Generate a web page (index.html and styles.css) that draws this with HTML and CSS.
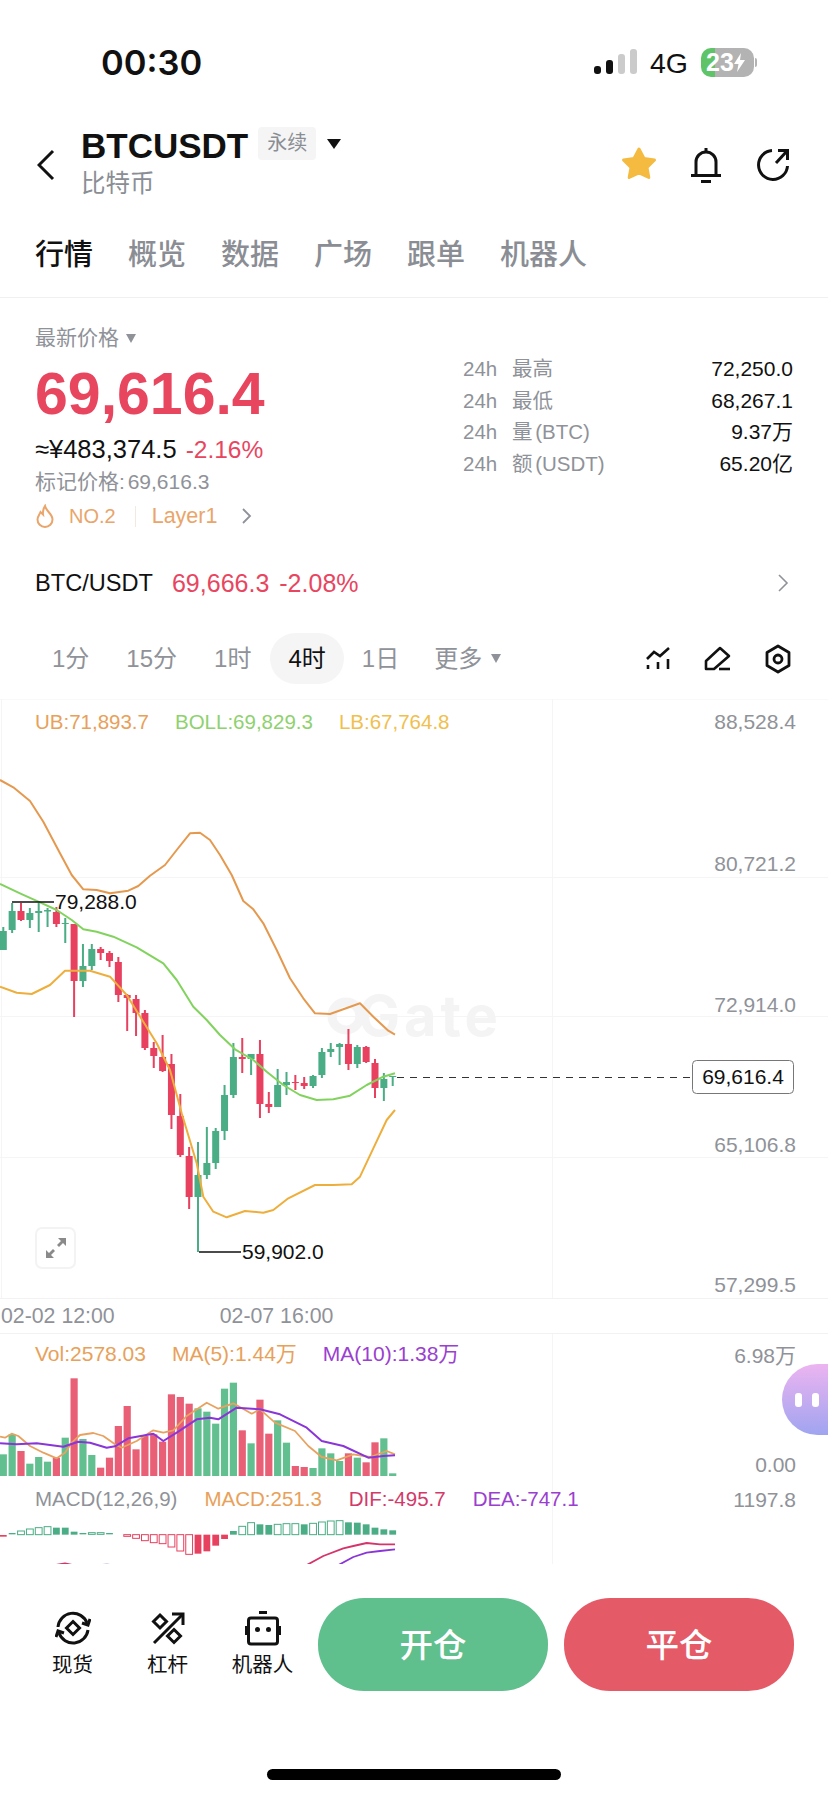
FILE: index.html
```html
<!DOCTYPE html>
<html lang="zh-CN">
<head>
    <meta charset="UTF-8">
    <meta name="viewport" content="width=device-width, initial-scale=1.0">
    <title>BTCUSDT 行情</title>
    <link rel="stylesheet" href="styles.css">
</head>
<body>
    <div class="page">
        <div class="status-bar">
            <span class="clock">00:30</span>
            <div class="status-right">
                <div class="signal">
                    <i class="bar-1"></i><i class="bar-2"></i><i class="bar-3"></i><i class="bar-4"></i>
                </div>
                <span class="network">4G</span>
                <div class="battery">
                    <span>23</span>
                    <svg width="11" height="19" viewBox="0 0 11 19"><path d="M7 0 L0 11 H4.5 L3 19 L11 7 H6 Z" fill="#fff"/></svg>
                </div>
                <i class="battery-nub"></i>
            </div>
        </div>

        <div class="nav">
            <svg class="back" width="18" height="32" viewBox="0 0 18 32"><path d="M16 2 L2 16 L16 30" fill="none" stroke="#111" stroke-width="3"/></svg>
            <div class="title-block">
                <div class="title-row">
                    <h1>BTCUSDT</h1>
                    <span class="tag">永续</span>
                    <i class="tri-down"></i>
                </div>
                <div class="subtitle">比特币</div>
            </div>
            <div class="nav-icons">
                <svg class="icon-star" width="36" height="34" viewBox="0 0 36 34"><path d="M18 3 L23 12.5 L33.5 14 L26 21.5 L27.8 31.5 L18 27 L8.2 31.5 L10 21.5 L2.5 14 L13 12.5 Z" fill="#f4bb40" stroke="#f4bb40" stroke-width="3" stroke-linejoin="round"/></svg>
                <svg width="32" height="38" viewBox="0 0 32 38" fill="none" stroke="#111" stroke-width="3"><path d="M6 29 V16 A10 10 0 0 1 26 16 V29"/><path d="M1 29.5 H31"/><path d="M16 2 V6"/><path d="M11 35.5 H21"/></svg>
                <svg width="36" height="36" viewBox="0 0 36 36" fill="none" stroke="#111" stroke-width="3"><path d="M17 4.5 A14.5 14.5 0 1 0 32.5 20"/><path d="M21 17 L32 5"/><path d="M23 4.5 H32.5 V14"/></svg>
            </div>
        </div>

        <div class="tabs">
            <span class="active">行情</span>
            <span>概览</span>
            <span>数据</span>
            <span>广场</span>
            <span>跟单</span>
            <span>机器人</span>
        </div>

        <div class="summary">
            <div class="price-col">
                <div class="price-label">最新价格<i class="tri-small"></i></div>
                <div class="price-big">69,616.4</div>
                <div class="price-sub">≈¥483,374.5<span class="red">-2.16%</span></div>
                <div class="price-mark">标记价格: 69,616.3</div>
                <div class="price-tags">
                    <svg width="20" height="24" viewBox="0 0 20 24"><path d="M10 2 C11 7 17.5 10 17.5 15.5 A7.5 7.5 0 0 1 2.5 15.5 C2.5 12.5 4.5 10.5 5.5 8 C6.5 9 7.5 10 8 10.5 C7.5 7 8.5 4.5 10 2 Z" fill="none" stroke="#e9a56a" stroke-width="2"/></svg>
                    <span class="rank">NO.2</span>
                    <i class="tag-sep"></i>
                    <span class="sector">Layer1</span>
                    <svg class="tag-more" width="12" height="18" viewBox="0 0 12 18"><path d="M2 2 L9 9 L2 16" fill="none" stroke="#8f9298" stroke-width="1.8"/></svg>
                </div>
            </div>
            <div class="stats-col">
                <div class="stat-row"><span class="stat-label"><b>24h</b>最高</span><span>72,250.0</span></div>
                <div class="stat-row"><span class="stat-label"><b>24h</b>最低</span><span>68,267.1</span></div>
                <div class="stat-row"><span class="stat-label"><b>24h</b>量 (BTC)</span><span>9.37万</span></div>
                <div class="stat-row"><span class="stat-label"><b>24h</b>额 (USDT)</span><span>65.20亿</span></div>
            </div>
        </div>

        <div class="spot-row">
            <span class="spot-name">BTC/USDT</span>
            <span class="spot-price">69,666.3</span>
            <span class="spot-change">-2.08%</span>
            <svg class="spot-more" width="12" height="20" viewBox="0 0 12 20"><path d="M2 2 L10 10 L2 18" fill="none" stroke="#8f9298" stroke-width="1.6"/></svg>
        </div>

        <div class="periods">
            <span>1分</span>
            <span>15分</span>
            <span>1时</span>
            <span class="active">4时</span>
            <span class="day">1日</span>
            <span class="more">更多</span>
            <i class="tri-small"></i>
            <div class="period-icons">
                <svg width="28" height="28" viewBox="0 0 28 28" fill="none" stroke="#111" stroke-width="2.6"><path d="M3 14 L10 7 L16 11 L25 3"/><path d="M4 20 V24"/><path d="M14 17 V24"/><path d="M24 14 V24"/></svg>
                <svg width="28" height="28" viewBox="0 0 28 28" fill="none" stroke="#111" stroke-width="2.6"><path d="M2 24 V16 L16 3 L25 11 L10 24 Z" stroke-linejoin="round"/><path d="M15 24 H26"/></svg>
                <svg width="28" height="30" viewBox="0 0 28 30" fill="none" stroke="#111" stroke-width="2.8"><path d="M14 2 L25 8.5 V21.5 L14 28 L3 21.5 V8.5 Z" stroke-linejoin="round"/><circle cx="14" cy="15" r="4"/></svg>
            </div>
        </div>

        <div class="kline">
            <svg id="klineChart" class="chart-svg" width="828" height="599" viewBox="0 699 828 599">
                <g class="grid">
                    <path class="grid-top" d="M0 699.5 H828"/>
                    <path d="M0 877.5 H828 M0 1016.5 H828 M0 1157.5 H828"/>
                    <path d="M1.5 699 V1298 M552.5 699 V1298"/>
                </g>
                <g class="watermark">
                    <circle cx="346" cy="1016" r="14" fill="none" stroke="#f4f4f4" stroke-width="9"/>
                    <text x="358" y="1036">Gate</text>
                </g>
                <g class="axis">
                    <text x="796" y="729">88,528.4</text>
                    <text x="796" y="871">80,721.2</text>
                    <text x="796" y="1012">72,914.0</text>
                    <text x="796" y="1152">65,106.8</text>
                    <text x="796" y="1292">57,299.5</text>
                </g>
            </svg>
            <div class="legend legend-main">
                <span class="c-ub">UB:71,893.7</span>
                <span class="c-boll">BOLL:69,829.3</span>
                <span class="c-lb">LB:67,764.8</span>
            </div>
            <div class="expand-btn">
                <svg width="22" height="22" viewBox="0 0 22 22" fill="#8a8a8a"><path d="M13 1 H21 V9 L18 6 L14 10 L12 8 L16 4 Z"/><path d="M9 21 H1 V13 L4 16 L8 12 L10 14 L6 18 Z"/></svg>
            </div>
        </div>

        <div class="time-axis">
            <span>02-02 12:00</span>
            <span>02-07 16:00</span>
        </div>

        <div class="vol">
            <svg id="volChart" class="chart-svg" width="828" height="147" viewBox="0 1333 828 147">
                <g class="grid"><path d="M552.5 1333 V1480"/></g>
                <g class="axis">
                    <text x="796" y="1362">6.98万</text>
                    <text x="796" y="1471">0.00</text>
                </g>
            </svg>
            <div class="legend legend-vol">
                <span class="c-ub">Vol:2578.03</span>
                <span class="c-ub">MA(5):1.44万</span>
                <span class="c-dea">MA(10):1.38万</span>
            </div>
        </div>

        <div class="macd">
            <svg id="macdChart" class="chart-svg" width="828" height="83" viewBox="0 1480 828 83">
                <g class="grid"><path d="M552.5 1480 V1563"/></g>
                <g class="axis"><text x="796" y="1506">1197.8</text></g>
            </svg>
            <div class="legend legend-macd">
                <span class="c-gray">MACD(12,26,9)</span>
                <span class="c-ub">MACD:251.3</span>
                <span class="c-dif">DIF:-495.7</span>
                <span class="c-dea">DEA:-747.1</span>
            </div>
        </div>

        <div class="bottom-bar">
            <div class="tool">
                <svg width="36" height="36" viewBox="0 0 36 36" fill="none" stroke="#111" stroke-width="3"><path d="M3 17 A15 15 0 0 1 32 13"/><path d="M33 20 A15 15 0 0 1 4 23"/><path d="M27 13 L33 15 L35 9"/><path d="M9 23 L3 21 L1 27"/><path d="M18 11.5 L24.5 18 L18 24.5 L11.5 18 Z"/></svg>
                <span>现货</span>
            </div>
            <div class="tool">
                <svg width="36" height="36" viewBox="0 0 36 36" fill="none" stroke="#111" stroke-width="3"><path d="M4 33 L33 4"/><path d="M22 4 H33 V15"/><path d="M10 5 L16.5 11.5 L10 18 L3.5 11.5 Z"/><path d="M24 19.5 L30.5 26 L24 32.5 L17.5 26 Z"/></svg>
                <span>杠杆</span>
            </div>
            <div class="tool">
                <svg width="36" height="36" viewBox="0 0 36 36"><path d="M14 1 H22 V4 H14 Z" fill="#111"/><rect x="3.5" y="8" width="29" height="26" rx="2.5" fill="none" stroke="#111" stroke-width="3"/><path d="M0 16 H3 V25 H0 Z M33 16 H36 V25 H33 Z" fill="#111"/><circle cx="12.5" cy="19.5" r="2.5" fill="#111"/><circle cx="23.5" cy="19.5" r="2.5" fill="#111"/></svg>
                <span>机器人</span>
            </div>
            <button class="trade-btn open">开仓</button>
            <button class="trade-btn close">平仓</button>
        </div>

        <div class="home-bar"></div>

        <div class="bubble"><i></i><i></i></div>
    </div>

    <script src="chart.js"></script>
</body>
</html>
```

FILE: styles.css
```css
* {
    margin: 0;
    padding: 0;
    box-sizing: border-box;
    font-family: 'Liberation Sans', 'Noto Sans CJK SC', sans-serif;
}

body {
    background: #fff;
    color: #111;
}

i {
    display: block;
    font-style: normal;
}

.page {
    position: relative;
    width: 828px;
    height: 1796px;
    overflow: hidden;
}

/* status bar */
.status-bar {
    display: flex;
    align-items: center;
    height: 122px;
    padding: 2px 71px 0 101px;
}

.clock {
    font-family: 'Inter', sans-serif;
    font-size: 34.5px;
    font-weight: 600;
}

.status-right {
    display: flex;
    align-items: center;
    margin-left: auto;
}

.signal {
    display: flex;
    align-items: flex-end;
    gap: 5px;
    height: 25px;
    margin-top: -2px;
}

.signal i {
    width: 7px;
    border-radius: 3px;
    background: #111;
}

.bar-1 { height: 8px; }
.bar-2 { height: 14px; }
.bar-3 { height: 20px; background: #cbcbcb !important; }
.bar-4 { height: 25px; background: #cbcbcb !important; }

.network {
    margin: 2px 13px 0 13px;
    font-size: 28.5px;
}

.battery {
    display: flex;
    align-items: center;
    width: 53px;
    height: 29px;
    padding-left: 5px;
    border-radius: 10px;
    background: linear-gradient(to right, #5fc468 27%, #b3b3b3 27%);
    color: #fff;
    font-size: 25px;
    font-weight: 700;
}

.battery-nub {
    width: 2px;
    height: 9px;
    margin-left: 1px;
    border-radius: 0 2px 2px 0;
    background: #b3b3b3;
}

/* nav */
.nav {
    display: flex;
    align-items: flex-start;
    height: 93px;
    padding: 5px 37px 0;
}

.back {
    margin-top: 22px;
    margin-right: 26px;
}

.title-row {
    display: flex;
    align-items: center;
    height: 33px;
}

.title-row h1 {
    margin-top: 4px;
    font-size: 35px;
    font-weight: 700;
}

.tag {
    width: 58px;
    height: 33px;
    margin-left: 10px;
    border-radius: 4px;
    background: #f5f5f5;
    color: #8a8e94;
    font-size: 20px;
    line-height: 33px;
    text-align: center;
}

.tri-down {
    width: 0;
    height: 0;
    margin-left: 11px;
    border-top: 10px solid #111;
    border-left: 7.5px solid transparent;
    border-right: 7.5px solid transparent;
}

.subtitle {
    margin-top: 11px;
    color: #8a8e94;
    font-size: 24.5px;
    line-height: 26px;
}

.nav-icons {
    display: flex;
    align-items: flex-start;
    gap: 33px;
    margin-left: auto;
    margin-top: 19px;
}

/* tabs */
.tabs {
    display: flex;
    align-items: center;
    gap: 35px;
    height: 83px;
    padding: 0 0 9px 35px;
    border-bottom: 1px solid #f0f0f0;
    color: #8a8e94;
    font-size: 29px;
    font-weight: 500;
}

.tabs .active {
    color: #111;
}

/* price summary */
.summary {
    display: flex;
    height: 247px;
}

.price-col {
    padding-left: 35px;
}

.price-label {
    display: flex;
    align-items: center;
    margin-top: 27px;
    color: #8f9298;
    font-size: 21px;
    line-height: 26px;
}

.tri-small {
    width: 0;
    height: 0;
    margin-left: 7px;
    border-top: 9px solid #8f9298;
    border-left: 5.5px solid transparent;
    border-right: 5.5px solid transparent;
}

.price-big {
    margin-top: 13px;
    color: #e8455f;
    font-size: 59px;
    font-weight: 700;
    line-height: 60px;
}

.price-sub {
    margin-top: 11px;
    font-size: 25.5px;
    line-height: 28px;
}

.red {
    margin-left: 9px;
    color: #e8455f;
    font-size: 24.5px;
}

.price-mark {
    margin-top: 5px;
    color: #8f9298;
    font-size: 21px;
    line-height: 26px;
    word-spacing: -3px;
}

.price-tags {
    display: flex;
    align-items: center;
    height: 30px;
    margin-top: 6px;
    color: #e9a56a;
    font-size: 21.5px;
}

.rank {
    margin-left: 14px;
    font-size: 20px;
}

.tag-sep {
    width: 1px;
    height: 21px;
    margin: 0 16px 0 19px;
    background: #f3e9df;
}

.tag-more {
    margin-left: 24px;
}

.stats-col {
    width: 365px;
    margin-left: auto;
    padding: 55px 35px 0 0;
    font-size: 21px;
}

.stat-row {
    display: flex;
    justify-content: space-between;
    height: 31.7px;
    line-height: 32px;
}

.stat-label {
    color: #8f9298;
    font-size: 20.5px;
    word-spacing: -3px;
}

.stat-label b {
    display: inline-block;
    width: 49px;
    font-weight: 400;
}

/* spot row */
.spot-row {
    display: flex;
    align-items: center;
    height: 76px;
    padding: 0 39px 0 35px;
    font-size: 25px;
}

.spot-name {
    font-size: 23.6px;
}

.spot-price {
    margin-left: 19px;
    color: #e8455f;
}

.spot-change {
    margin-left: 10px;
    color: #e8455f;
}

.spot-more {
    margin-left: auto;
}

/* period selector */
.periods {
    display: flex;
    align-items: center;
    gap: 1px;
    height: 78px;
    padding: 0 36px 3px 34px;
    color: #8f9298;
    font-size: 24px;
}

.periods span {
    height: 51px;
    padding: 0 18px;
    border-radius: 26px;
    line-height: 51px;
}

.periods .active {
    background: #f5f5f5;
    color: #111;
}

.periods .day {
    margin-left: -1px;
}

.periods .more {
    margin-left: -2px;
}

.periods .tri-small {
    margin-left: -10px;
}

.period-icons {
    display: flex;
    align-items: center;
    gap: 32px;
    margin-left: auto;
}

/* charts */
.kline {
    position: relative;
    height: 599px;
}

.vol {
    position: relative;
    height: 147px;
}

.macd {
    position: relative;
    height: 83px;
    overflow: hidden;
}

.chart-svg {
    position: absolute;
    top: 0;
    left: 0;
    display: block;
}

.grid path {
    fill: none;
    stroke: #f5f5f5;
    stroke-width: 1;
}

.grid .grid-top {
    stroke: #f9f9f9;
}

.axis text {
    fill: #8f9298;
    font-size: 21px;
    text-anchor: end;
}

.watermark text {
    fill: #f4f4f4;
    font-family: 'Inter', sans-serif;
    font-size: 56px;
    font-weight: 700;
    letter-spacing: 4px;
}

.chart-mark {
    fill: #111;
    font-size: 21px;
}

.legend {
    position: relative;
    display: flex;
    gap: 27px;
    padding-left: 35px;
    font-size: 20.5px;
    line-height: 26px;
}

.legend-main {
    gap: 26px;
    padding-top: 10px;
    font-size: 20.5px;
}

.legend-vol {
    gap: 26px;
    padding-top: 7px;
    font-size: 21px;
}

.legend-macd {
    padding-top: 5px;
}

.c-ub { color: #e8a15a; }
.c-boll { color: #8fd16f; }
.c-lb { color: #f0c04e; }
.c-dea { color: #9a40d0; }
.c-dif { color: #d23a6a; }
.c-gray { color: #8f9298; }

.expand-btn {
    position: absolute;
    top: 528px;
    left: 35px;
    display: flex;
    align-items: center;
    justify-content: center;
    width: 41px;
    height: 42px;
    border: 2px solid #f3f3f3;
    border-radius: 7px;
    background: #fff;
}

.time-axis {
    display: flex;
    align-items: center;
    gap: 105px;
    height: 36px;
    padding-left: 1px;
    border-top: 1px solid #f2f2f2;
    border-bottom: 1px solid #f2f2f2;
    color: #8f9298;
    font-size: 21.3px;
}

/* bottom bar */
.bottom-bar {
    display: flex;
    align-items: flex-start;
    height: 127px;
    padding: 34px 0 0 25px;
}

.tool {
    display: flex;
    flex-direction: column;
    align-items: center;
    width: 95px;
    padding-top: 12px;
    font-size: 20.5px;
    line-height: 24px;
}

.tool span {
    margin-top: 7px;
}

.trade-btn {
    width: 230px;
    height: 93px;
    padding-bottom: 4px;
    border: none;
    border-radius: 46px;
    color: #fff;
    font-size: 33.5px;
    font-weight: 500;
}

.trade-btn.open {
    margin-left: 8px;
    background: #5fbf8d;
}

.trade-btn.close {
    margin-left: 16px;
    background: #e55a67;
}

.home-bar {
    width: 294px;
    height: 11px;
    margin: 78px auto 0;
    border-radius: 6px;
    background: #000;
}

.bubble {
    position: absolute;
    top: 1364px;
    left: 782px;
    display: flex;
    gap: 10px;
    align-items: center;
    width: 46px;
    height: 71px;
    padding-left: 13px;
    border-radius: 36px 0 0 36px;
    background: linear-gradient(#ecb4f0, #a0a4f0);
}

.bubble i {
    width: 7px;
    height: 14px;
    border-radius: 3px;
    background: #fff;
}
```

FILE: chart.js
```js
const NS = 'http://www.w3.org/2000/svg';
const GREEN = '#4aad85';
const RED = '#e8405f';

function add(svg, tag, attrs, text) {
    const el = document.createElementNS(NS, tag);
    for (const k in attrs) el.setAttribute(k, attrs[k]);
    if (text) el.textContent = text;
    svg.appendChild(el);
    return el;
}

function barX(i) {
    return 3.3 + 8.85 * i;
}

// curve points were read at 3x, relative to a top offset
function line(svg, top, pts, color, width) {
    const d = pts.map(p => (p[0] / 3).toFixed(1) + ',' + (top + p[1] / 3).toFixed(1)).join(' ');
    add(svg, 'polyline', { points: d, fill: 'none', stroke: color, 'stroke-width': width, 'stroke-linejoin': 'round' });
}

// g = up, r = down: [colour, bodyTop, bodyBottom, wickTop, wickBottom]
const candles = [
    ['g', 931, 950, 927, 950], ['g', 911, 930, 903, 933], ['r', 911, 920, 903, 921], ['g', 913, 920, 908, 928],
    ['g', 911, 913, 903, 932], ['g', 910, 911.5, 908, 927], ['r', 912, 924, 907, 927], ['g', 923, 924, 918, 943],
    ['r', 924, 981, 924, 1017], ['g', 966, 981, 944, 987], ['g', 949, 966, 944, 970], ['r', 949, 953, 947, 960],
    ['r', 953, 961, 951, 967], ['r', 962, 995, 957, 1002], ['r', 995, 998, 994, 1031], ['r', 999, 1013, 995, 1036],
    ['r', 1013, 1048, 1010, 1050], ['r', 1048, 1056, 1042, 1068], ['r', 1057, 1071, 1035, 1072], ['r', 1064, 1115, 1054, 1129],
    ['r', 1116, 1155, 1094, 1157], ['r', 1156, 1197, 1147, 1209], ['g', 1175, 1197, 1142, 1252], ['g', 1163, 1175, 1127, 1179],
    ['g', 1131, 1163, 1128, 1169], ['g', 1095, 1131, 1085, 1140], ['g', 1057, 1095, 1043, 1098], ['r', 1057, 1059, 1038, 1073],
    ['g', 1054, 1059, 1054, 1075], ['r', 1054, 1104, 1040, 1118], ['r', 1104, 1107, 1092, 1113], ['g', 1085, 1107, 1069, 1107],
    ['g', 1082, 1085, 1072, 1095], ['r', 1082, 1083, 1075, 1090], ['r', 1083, 1086, 1077, 1089], ['g', 1076, 1086, 1075, 1088],
    ['g', 1052, 1075, 1048, 1078], ['g', 1049, 1052, 1043, 1057], ['g', 1044, 1047, 1043, 1065], ['r', 1044, 1064, 1029, 1070],
    ['g', 1047, 1064, 1045, 1068], ['r', 1047, 1062, 1046, 1063], ['r', 1063, 1088, 1059, 1098], ['g', 1079, 1088, 1073, 1101],
    ['g', 1076, 1077, 1076, 1086]
];

const kline = document.getElementById('klineChart');

candles.forEach((c, i) => {
    const color = c[0] === 'g' ? GREEN : RED;
    const x = barX(i);
    add(kline, 'rect', { x: x - 1, y: c[3], width: 2, height: c[4] - c[3], fill: color });
    add(kline, 'rect', { x: x - 3.5, y: c[1], width: 7, height: c[2] - c[1], fill: color });
});

// bollinger bands
line(kline, 700, [[0, 240], [40, 262], [90, 303], [130, 365], [180, 460], [215, 525], [250, 568], [290, 570], [330, 580], [385, 572], [415, 558], [450, 527], [495, 495], [530, 450], [570, 400], [600, 398], [630, 420], [660, 465], [695, 525], [730, 603], [760, 628], [790, 670], [830, 750], [870, 835], [910, 895], [945, 940], [990, 942], [1030, 928], [1080, 910], [1120, 950], [1165, 992], [1185, 1004]], '#e5994f', 2);
line(kline, 1020, [[0, -408], [60, -380], [120, -353], [170, -330], [215, -300], [250, -272], [290, -265], [340, -250], [410, -218], [490, -170], [530, -120], [580, -40], [620, 0], [660, 45], [705, 88], [760, 120], [800, 155], [850, 195], [900, 225], [950, 240], [1000, 238], [1050, 227], [1100, 195], [1150, 170], [1185, 160]], '#82d35e', 2);
line(kline, 1020, [[0, -100], [50, -82], [95, -78], [150, -105], [195, -148], [270, -148], [330, -130], [380, -75], [430, 5], [470, 70], [510, 150], [545, 280], [590, 430], [610, 530], [640, 575], [680, 592], [735, 573], [790, 578], [820, 570], [865, 535], [945, 495], [1000, 495], [1055, 493], [1080, 470], [1120, 385], [1160, 300], [1185, 270]], '#eeae3c', 2);

// high and low marks
add(kline, 'path', { d: 'M12 902 H54 M199 1252 H241', stroke: '#111', 'stroke-width': 1.4, fill: 'none' });
add(kline, 'text', { x: 55, y: 909, class: 'chart-mark' }, '79,288.0');
add(kline, 'text', { x: 242, y: 1259, class: 'chart-mark' }, '59,902.0');

// last price line
add(kline, 'path', { d: 'M397 1077.5 H692', stroke: '#333', 'stroke-width': 1.2, 'stroke-dasharray': '7 6', fill: 'none' });
add(kline, 'rect', { x: 692.5, y: 1060.5, width: 101, height: 33, rx: 4, fill: '#fff', stroke: '#777', 'stroke-width': 1 });
add(kline, 'text', { x: 743, y: 1084, class: 'chart-mark', 'text-anchor': 'middle' }, '69,616.4');

// volume bars: top of each bar at 3x, from y 1320
const volTops = [400, 340, 390, 428, 408, 422, 410, 350, 172, 354, 402, 440, 410, 315, 255, 385, 345, 340, 362, 220, 228, 248, 262, 272, 308, 203, 185, 328, 367, 236, 338, 298, 365, 435, 438, 441, 382, 397, 420, 397, 410, 424, 364, 352, 457];
const volDown = [2, 6, 8, 11, 12, 13, 14, 15, 16, 17, 18, 19, 20, 21, 27, 29, 30, 33, 34, 39, 41, 42];
const vol = document.getElementById('volChart');

volTops.forEach((t, i) => {
    const y = 1320 + t / 3;
    add(vol, 'rect', { x: barX(i) - 3.6, y: y, width: 7.2, height: 1475 - y, fill: volDown.includes(i) ? '#e85f76' : '#62bf90' });
});

line(vol, 1320, [[0, 347], [15, 350], [35, 338], [55, 345], [90, 375], [130, 395], [170, 412], [195, 395], [215, 365], [240, 342], [280, 336], [310, 345], [345, 370], [365, 380], [410, 360], [460, 328], [490, 335], [520, 328], [560, 285], [620, 245], [655, 263], [700, 247], [755, 278], [780, 265], [825, 305], [885, 330], [925, 375], [965, 408], [1010, 418], [1060, 400], [1110, 408], [1160, 390], [1185, 400]], '#e8a25f', 1.8);
line(vol, 1320, [[0, 367], [50, 370], [110, 367], [190, 377], [235, 362], [270, 365], [320, 380], [345, 376], [385, 352], [460, 338], [490, 360], [530, 335], [590, 295], [630, 290], [655, 295], [710, 260], [780, 265], [840, 280], [920, 320], [965, 360], [1030, 375], [1105, 410], [1150, 405], [1185, 403]], '#8a35d8', 2);

// macd histogram: [top, bottom, solid] at 3x, from y 1320
const hist = [
    [642, 647, 1], [636, 640, 1], [630, 641, 0], [624, 641, 0], [620, 641, 0], [617, 641, 0], [620, 641, 1], [620, 641, 1],
    [632, 641, 1], [636, 640, 1], [635, 640, 0], [635, 640, 0], [636, 640, 1], null, [641, 646, 0], [641, 652, 0],
    [641, 659, 0], [641, 665, 0], [641, 668, 0], [641, 678, 0], [641, 690, 0], [641, 700, 0], [641, 698, 1], [641, 691, 1],
    [641, 674, 1], [641, 654, 1], [630, 641, 1], [616, 641, 0], [605, 641, 0], [610, 641, 1], [612, 641, 1], [610, 641, 0],
    [608, 641, 0], [608, 641, 0], [610, 641, 1], [607, 641, 0], [603, 641, 0], [600, 641, 0], [599, 641, 0], [604, 641, 1],
    [605, 641, 1], [610, 641, 1], [620, 641, 1], [625, 641, 1], [628, 641, 1]
];
const macd = document.getElementById('macdChart');

hist.forEach((h, i) => {
    if (!h) return;
    const color = h[0] < 641 && i !== 0 ? '#4aad85' : '#e8405f';
    const y = 1320 + h[0] / 3;
    const tall = (h[1] - h[0]) / 3;
    add(macd, 'rect', {
        x: barX(i) - 3.4, y: y, width: 6.8, height: tall,
        fill: h[2] ? color : '#fff',
        stroke: color,
        'stroke-width': h[2] ? 0 : 1
    });
});

line(macd, 1320, [[915, 735], [970, 705], [1030, 682], [1060, 675], [1100, 666], [1140, 670], [1185, 670]], '#d5336b', 1.8);
line(macd, 1320, [[1010, 735], [1060, 708], [1100, 695], [1140, 690], [1185, 685]], '#8a35d8', 1.8);
line(macd, 1320, [[150, 735], [195, 727], [230, 735]], '#d5336b', 1.8);
line(macd, 1320, [[285, 735], [320, 730], [350, 735]], '#b9a3d8', 1.8);
```
